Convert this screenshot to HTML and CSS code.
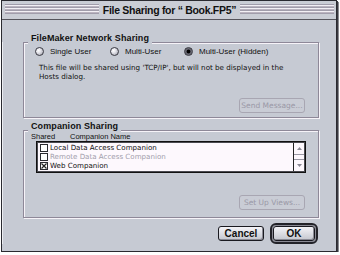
FILE: index.html
```html
<!DOCTYPE html>
<html lang="en">
<head>
    <meta charset="UTF-8">
    <meta name="viewport" content="width=device-width, initial-scale=1.0">
    <title>File Sharing</title>
    <link rel="stylesheet" href="styles.css">
</head>
<body>
<div class="window">
    <!-- Title bar -->
    <div class="titlebar">
        <div class="stripes"></div>
        <div class="title">File Sharing for “ Book.FP5”</div>
        <div class="stripes"></div>
    </div>

    <div class="content">
        <!-- Network sharing -->
        <div class="group group-network">
            <div class="group-title">FileMaker Network Sharing</div>
            <div class="radio-row">
                <label class="radio"><span class="radio-dot"></span>Single User</label>
                <label class="radio"><span class="radio-dot"></span>Multi-User</label>
                <label class="radio"><span class="radio-dot checked"></span>Multi-User (Hidden)</label>
            </div>
            <p class="note">This file will be shared using 'TCP/IP', but will not be displayed in the<br>Hosts dialog.</p>
            <div class="group-actions">
                <button class="btn btn-disabled">Send Message...</button>
            </div>
        </div>

        <!-- Companion sharing -->
        <div class="group group-companion">
            <div class="group-title">Companion Sharing</div>
            <div class="list-head">
                <span class="col-shared">Shared</span>
                <span>Companion Name</span>
            </div>
            <div class="list">
                <ul class="list-rows">
                    <li><span class="check"></span>Local Data Access Companion</li>
                    <li class="dim"><span class="check"></span>Remote Data Access Companion</li>
                    <li>
                        <span class="check">
                            <svg width="6" height="6" viewBox="0 0 6 6"><path d="M0.5 0.5L5.5 5.5M5.5 0.5L0.5 5.5" stroke="#222" stroke-width="1.2"/></svg>
                        </span>Web Companion
                    </li>
                </ul>
                <div class="scrollbar">
                    <div class="arrow"><svg width="5" height="3" viewBox="0 0 5 3"><path d="M2.5 0L5 3H0Z" fill="#8a8894"/></svg></div>
                    <div class="track"></div>
                    <div class="arrow"><svg width="5" height="3" viewBox="0 0 5 3"><path d="M0 0H5L2.5 3Z" fill="#8a8894"/></svg></div>
                </div>
            </div>
            <div class="group-actions actions-views">
                <button class="btn btn-disabled">Set Up Views...</button>
            </div>
        </div>

        <!-- Dialog buttons -->
        <div class="footer">
            <button class="btn btn-cancel">Cancel</button>
            <div class="default-ring">
                <button class="btn btn-ok">OK</button>
            </div>
        </div>
    </div>
</div>
</body>
</html>
```

FILE: styles.css
```css
body {
    margin: 0;
    background: #ffffff;
    font-family: "Liberation Sans", Arial, sans-serif;
    color: #111;
}

.window {
    box-sizing: border-box;
    width: 336px;
    height: 252px;
    margin-left: 1px;
    background: #c6cad3;
    border: 1px solid #2a2a30;
    box-shadow: 1px 1px 0 #3a3a40, 2px 2px 0 #8a8a90;
}

.titlebar {
    display: flex;
    align-items: flex-start;
    height: 18px;
    padding: 0 2px 0 3px;
    border-bottom: 1px solid #55545c;
    background: #cacdd5;
}

.stripes {
    flex: 1;
    height: 10px;
    margin-top: 3px;
    background: repeating-linear-gradient(to bottom, #a19dab 0 1px, #f3f0f5 1px 2px, #bbb4c0 2px 3px);
}

.title {
    padding: 0 4px;
    font-size: 10.5px;
    font-weight: bold;
    line-height: 18px;
    letter-spacing: -0.3px;
    white-space: nowrap;
}

.content {
    padding: 0 17px 0 21px;
    box-shadow: inset 1px 0 0 #eceef2;
}

.group {
    box-sizing: border-box;
    border: 1px solid #8e8898;
    box-shadow: 1px 1px 0 #f6f3f8, inset 1px 1px 0 #f6f3f8;
}

.group-network {
    height: 76px;
    margin-top: 22px;
}

.group-companion {
    height: 88px;
    margin-top: 12px;
}

.group-title {
    width: max-content;
    margin: -10px 0 0 4px;
    padding: 0 3px;
    background: #c6cad3;
    font-size: 9px;
    font-weight: bold;
    line-height: 11px;
    letter-spacing: 0.1px;
}

.radio-row {
    display: grid;
    grid-template-columns: 75px 74px auto;
    margin-top: 2px;
    padding-left: 11px;
    font-size: 8px;
    line-height: 11px;
}

.radio {
    display: flex;
    align-items: center;
    gap: 6px;
}

.radio-dot {
    box-sizing: border-box;
    width: 9px;
    height: 9px;
    border: 1px solid #3a3a42;
    border-radius: 50%;
    background: radial-gradient(circle at 35% 35%, #ffffff 0, #e4e4ea 35%, #9a9aa6 100%);
}

.radio-dot.checked {
    background: radial-gradient(circle, #000 0 30%, #5a5a64 45%, #8c8c96 100%);
}

.note {
    margin: 6px 0 0 15px;
    font-family: "DejaVu Sans", sans-serif;
    font-size: 7.15px;
    line-height: 9px;
    white-space: nowrap;
}

.group-actions {
    display: flex;
    justify-content: flex-end;
    margin-top: 17px;
    padding-right: 13px;
}

.actions-views {
    margin-top: 22px;
}

.btn {
    box-sizing: border-box;
    font-family: "Liberation Sans", Arial, sans-serif;
    padding: 0;
    cursor: pointer;
}

.btn-disabled {
    width: 66px;
    height: 15px;
    border: 1px solid #a8a6b2;
    border-radius: 3px;
    background: #c9ccd5;
    color: #9a98a6;
    font-family: "DejaVu Sans", sans-serif;
    font-size: 7.5px;
}

.list-head {
    display: flex;
    padding-left: 7px;
    font-size: 7.5px;
    line-height: 9px;
}

.col-shared {
    width: 39px;
}

.list {
    box-sizing: border-box;
    display: flex;
    width: 270px;
    height: 32px;
    margin-left: 12px;
    border: 1px solid #111;
    box-shadow: inset 1px 1px 0 #4a4a50, inset -1px -1px 0 #4a4a50;
    background: #fdf8fd;
    padding: 1px;
}

.list-rows {
    flex: 1;
    margin: 0;
    padding: 0 0 0 2px;
    list-style: none;
    font-family: "DejaVu Sans", sans-serif;
    font-size: 7.1px;
    line-height: 9px;
}

.list-rows li {
    display: flex;
    align-items: center;
    gap: 2px;
    height: 9px;
}

.list-rows li.dim {
    color: #a29eac;
}

.check {
    box-sizing: border-box;
    display: flex;
    align-items: center;
    justify-content: center;
    width: 8px;
    height: 8px;
    border: 1px solid #2a2a30;
    background: #fff;
}

.scrollbar {
    display: flex;
    flex-direction: column;
    width: 10px;
    border-left: 1px solid #222;
}

.arrow {
    display: flex;
    align-items: center;
    justify-content: center;
    height: 11px;
}

.track {
    flex: 1;
    border-top: 1px solid #9a98a4;
    border-bottom: 1px solid #9a98a4;
}

.footer {
    display: flex;
    justify-content: flex-end;
    align-items: center;
    gap: 6px;
    margin-top: 5px;
    padding-right: 1px;
}

.btn-cancel,
.btn-ok {
    height: 15px;
    border: 1px solid #1a1a20;
    border-radius: 3px;
    background: linear-gradient(#f4f4f8, #c4c6ce);
    box-shadow: inset -1px -1px 0 #8a8a94;
    font-size: 10px;
    font-weight: bold;
    color: #111;
}

.btn-cancel {
    width: 46px;
}

.btn-ok {
    width: 42px;
}

.default-ring {
    display: flex;
    padding: 1px;
    border: 2px solid #222228;
    border-radius: 6px;
    box-shadow: inset 0 0 0 1px #8a8a94;
}
```
